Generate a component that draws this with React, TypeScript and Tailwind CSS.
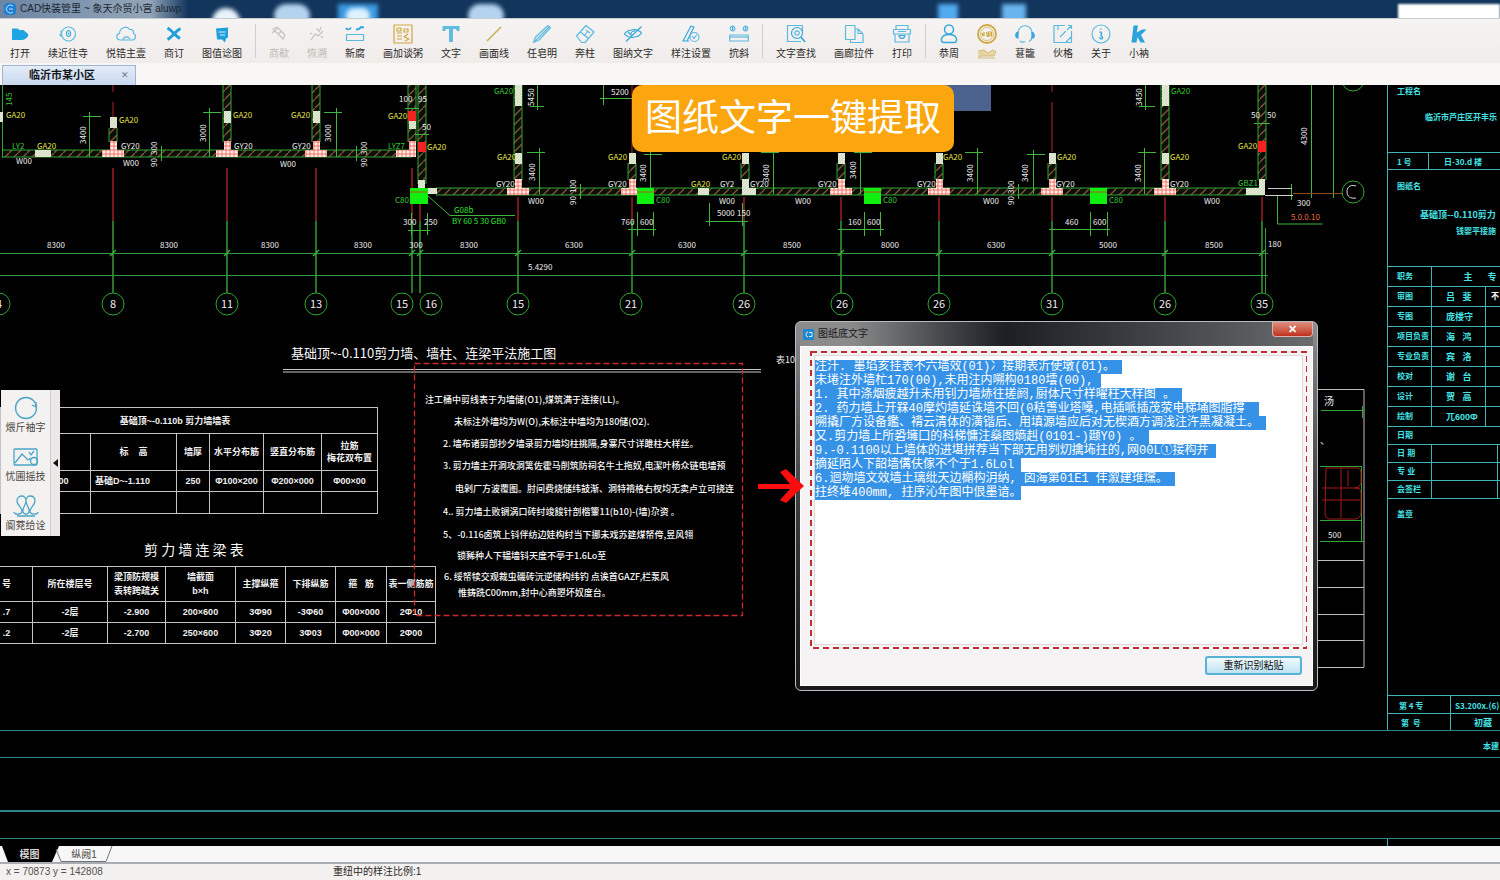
import React, { useEffect, useRef } from "react";

const BLUE = "#35a8dc";
const LIGHT = "#5cb9e0";
const GOLD = "#cfa73f";
const GREEN = "#2fa534";
const AXIS = "#3fb53c";
const CYAN = "#3fb5b8";
const TEAL = "#2f8587";
const YELLOW = "#e3e04a";

type Tool = { label: string; icon: React.ReactNode; tone?: "off" | "gold" };

const groups: Tool[][] = [
  [
    { label: "打开", icon: <path d="M2 4.500h6l1 1.500h4.500l4 3.500c1.500 1.500.5 3-.5 4-1.500 1.500-3 2.500-5 2.500H2z" fill="#1fa5e3" stroke="none" /> },
    { label: "续近往寺", icon: <g stroke={LIGHT}><circle cx="10.500" cy="10" r="7" /><path d="M3 6.500v6M3 12.500l-1.500-2" /><ellipse cx="10.500" cy="9.500" rx="2" ry="3" stroke={BLUE} /><path d="M10.500 8.500v2" /></g> },
    { label: "悦锆主壹", icon: <g><path d="M4.500 16C0 16-.5 10 3.500 9.500 3.500 4 10.500 1 13.500 5.500c3-.5 4.500 1.500 4 4 3.500 1.500 2 6.500-1.200 6.500z" stroke={LIGHT} /><path d="M7 16c1-4 5-4 7-1" stroke={LIGHT} /></g> },
    { label: "商订", icon: <g stroke="#1fa0dc" strokeWidth="3"><path d="M3.500 4c2 1 4 3 6.500 5.500s4 4 6 5M16.500 4.500c-3 1.500-4 3-6.500 5.500S5.500 14.500 3.500 15.500" /></g> },
    { label: "图值谂图", icon: <g><path d="M4 4.500l12-1v10l-2 1-1 4-3-3H5z" fill="#1f9fdc" stroke="none" /><path d="M6.500 8h7M8 11h5" stroke="#d5effb" /></g> },
  ],
  [
    { label: "商欷", tone: "off", icon: <g stroke="#c4c2be"><path d="M4 5l4-2 8 8-2 4zM3 9l6-5M9 10l4-3" /></g> },
    { label: "恢溯", tone: "off", icon: <g stroke="#c4c2be"><path d="M4 16l4-6 3 2 5-5M10 4l1 3M14 3l-2 5M5 9l-2 1M14 12l2 2" /></g> },
    { label: "新腐", icon: <g stroke={LIGHT}><path d="M1 4c1 2 4 2 5-.5M11 5.500c2.500 0 4-.5 5-2.500l3 .5" stroke={BLUE} strokeWidth="1.800" /><rect x="1.500" y="10.500" width="17" height="6" /></g> },
    { label: "画加谈粥", icon: <g stroke={GOLD}><rect x="1" y="1" width="18" height="18" /><path d="M4 4h4v3H4zM4 9h5M4 12h5M4 15h5M11 5h4v3h-4zM15 10l-4 3 5 2-4 2" /></g> },
    { label: "文字", icon: <path d="M1.500 2h17v5h-2.500l-1-2h-3v13h-4V5H5L4 7H1.500z" fill="#62bbe0" stroke="none" /> },
    { label: "画面线", icon: <path d="M3 17L17 3" stroke="#c9b25c" strokeWidth="1.600" /> },
    { label: "任皂明", icon: <g stroke={LIGHT}><path d="M1.500 18.500l2-5.500L16 1.500l2.500 2L7 16z" /><path d="M3 17L17 3" /></g> },
    { label: "奔柱", icon: <g stroke={LIGHT}><path d="M1.500 12L11 1.500l8 6.500-9 10.500H6.500z" /><path d="M5.500 8l8 6.500M11 6l4 3M9 12l4-5" /></g> },
    { label: "图纳文字", icon: <g stroke={BLUE}><path d="M1.500 10c3-5 13-6 17-1-3 5-13 6-17 1z" /><path d="M3 17.500L18.500 2.500M8 10c0-2 2-3 4-3M5 8l4 4" /></g> },
    { label: "样注设置", icon: <g stroke={LIGHT}><path d="M2 17L10 2l3 1-7 14zM2 17h6" stroke={BLUE} /><circle cx="13.500" cy="13" r="4.500" /><path d="M11 12l2 2.500 3-4" /></g> },
    { label: "抭斜", icon: <g stroke={LIGHT}><circle cx="3.500" cy="4.500" r="2.300" /><circle cx="16.500" cy="4.500" r="2.300" /><path d="M3.500 3v3M16.500 3v3" stroke={BLUE} /><rect x=".7" y="11" width="18.600" height="6" /><path d="M1 13h18" /></g> },
  ],
  [
    { label: "文字查找", icon: <g stroke={LIGHT}><path d="M15 17.500H1.500v-16h15V7" /><circle cx="11" cy="9" r="5.500" stroke={BLUE} /><circle cx="11" cy="9" r="2.200" /><path d="M15 13l4 5" stroke={BLUE} strokeWidth="1.600" /></g> },
    { label: "画廊拉件", icon: <g stroke={LIGHT}><path d="M1.500 1.500h9.500v14H1.500zM11 5h3l5 5v8.500H6.500v-3M14 5v4.500h5" /></g> },
    { label: "打印", icon: <g stroke={LIGHT}><path d="M4 5V1.500h12V5M1.500 5.500h17V10h-17zM3 10v8h14v-8M6 7.500h8" /><path d="M7 11.500c1 4 5 4 6 0z" stroke={BLUE} /></g> },
  ],
  [
    { label: "恭周", icon: <g stroke={BLUE} strokeWidth="1.500"><circle cx="10" cy="5.500" r="4.500" /><path d="M5 18.500c-3 0-3-3-2-5 2-4 12-4 14 0 1 2 1 5-2 5z" /></g> },
    { label: "会员", tone: "gold", icon: <g stroke={GOLD}><circle cx="10" cy="10" r="9" strokeWidth="1.800" /><circle cx="10" cy="10" r="6.500" strokeWidth=".7" /><path d="M5 9l1 3M7 8v4M9.500 8l1 5M11.500 8h3v4h-3zM11.500 10h3" /></g> },
    { label: "葚籠", icon: <g stroke={LIGHT}><path d="M3 10C2-1 18-1 17 10M14 17.500c2-1 3-3 3-5M5 17c2 1.500 4 1 5 .5" /><path d="M3 8v6c-3 0-3-5 0-6zM17 8v6c3 0 3-5 0-6z" fill={BLUE} stroke={BLUE} /></g> },
    { label: "伙格", icon: <g stroke={LIGHT}><path d="M12 1.500H1v17h17.500V7M5 2v4M7 13l6-6M14 6l4-4M13 18l5-5M15 1.500h3.500V5" /></g> },
    { label: "关于", icon: <g stroke={LIGHT}><circle cx="10" cy="10" r="9" /><path d="M10 4.500v1M8.500 8c3 0 2 1 1.500 3 0 2 2 1 1.500 3-1 1.500-3 1-2.500-1" stroke={BLUE} strokeWidth="1.400" /></g> },
    { label: "小衲", icon: <path d="M4.500 1.500h4.500l-1.200 7L13 5.500h4.500L12 11l4 7.500h-4.500L8.500 13l-1 5.500H2.500z" fill="#2aa3da" stroke="none" /> },
  ],
];

function TitleBar() {
  return (
    <header className="relative flex h-[18px] items-center gap-1 overflow-hidden bg-[#12355c] pl-1">
      <div className="absolute inset-y-0 left-0 w-[188px] bg-gradient-to-r from-[#6d86a3] from-0% via-[#93a5b9] via-80% to-transparent" />
      <div className="absolute top-2 left-[212px] h-5 w-7 rounded-t-full bg-[#e8f3fb] blur-[2px]" />
      <div className="absolute top-1 left-[274px] h-6 w-9 rounded-full bg-[#b4d3ee] blur-[2px]" />
      <div className="absolute top-1 left-[338px] h-5 w-10 bg-[#3d9ae0] blur-[2px]" />
      <div className="absolute top-2 left-[346px] h-4 w-6 rounded-full bg-[#def2ff] blur-[2px]" />
      <div className="absolute top-1 left-[468px] h-6 w-9 rounded-full bg-[#b4d3ee] blur-[2px]" />
      <div className="absolute top-1 left-[938px] h-5 w-5 bg-[#52aaf0] blur-[2px]" />
      <div className="absolute top-1 left-[1002px] h-5 w-6 bg-[#69b4ee] blur-[2px]" />
      <div className="absolute top-1 right-0 h-5 w-[102px] bg-white blur-[1px]" />
      <span className="relative flex size-3 items-center justify-center rounded-sm bg-[#1c7fd2]">
        <svg viewBox="0 0 12 12" className="size-3" fill="none" stroke="#bfe4ff"><path d="M9 3a4 4 0 1 0 0 6M5 6h4" /></svg>
      </span>
      <h1 className="relative text-[10px] leading-none text-[#1b2530]">CAD快装管里 ~ 象天尒贸小宫 aluwp</h1>
    </header>
  );
}

function Toolbar() {
  return (
    <nav aria-label="工具栏" className="flex h-[45px] items-stretch border-t border-[#c9cdd2] bg-gradient-to-b from-[#f6f4f3] to-[#efecea] pl-[10px]">
      {groups.map((tools, g) => (
        <React.Fragment key={g}>
          {g > 0 && <span className="mx-[13px] my-[5px] w-px bg-[#d2cecb]" />}
          <div className="flex gap-[18px]">
            {tools.map((t) => (
              <button
                key={t.label}
                disabled={t.tone === "off"}
                aria-label={t.label}
                className={
                  "flex flex-col items-center gap-1 pt-[5px] text-[10px] leading-[12px] whitespace-nowrap " +
                  (t.tone === "off" ? "text-[#bdb9b4]" : t.tone === "gold" ? "text-[#cdb36a]" : "text-[#2c2a29]")
                }
              >
                <svg viewBox="0 0 20 20" className="size-5" fill="none" strokeWidth="1.200" strokeLinejoin="round">{t.icon}</svg>
                {t.tone === "gold" ? (
                  <svg viewBox="0 0 20 12" className="h-3 w-5" fill="#e6d6a4" stroke="#cdb36a" strokeWidth=".8">
                    <path d="M1 3l6-1 4 3 5-3 3 2-2 4H4l-3 2M2 10h16" />
                  </svg>
                ) : (
                  t.label
                )}
              </button>
            ))}
          </div>
        </React.Fragment>
      ))}
    </nav>
  );
}

function FileTabs() {
  return (
    <div className="flex h-[22px] items-end bg-[#f9f7f6] pl-[2px]">
      <div className="flex h-5 w-[134px] items-center justify-between border border-b-0 border-[#9fb4d4] bg-gradient-to-b from-[#e3ecf8] to-[#c9d9ef] pr-[6px] pl-[26px]">
        <span className="text-[11px] leading-none font-bold text-[#15181c]">临沂市某小区</span>
        <button aria-label="关闭" className="text-[9px] leading-none text-[#6d7c92]">✕</button>
      </div>
    </div>
  );
}

/* ---------- plan drawing primitives ---------- */

function VWall({ x, y1, y2 }: { x: number; y1: number; y2: number }) {
  return (
    <g>
      <rect x={x - 4} y={y1} width="8" height={y2 - y1} fill="url(#hatch)" />
      <path d={`M${x - 4} ${y1}V${y2}M${x + 4} ${y1}V${y2}`} stroke={GREEN} />
    </g>
  );
}

function HWall({ y, x1, x2 }: { y: number; x1: number; x2: number }) {
  return (
    <g>
      <rect x={x1} y={y} width={x2 - x1} height="7" fill="url(#hatch)" />
      <path d={`M${x1} ${y}H${x2}M${x1} ${y + 7}H${x2}`} stroke={GREEN} />
    </g>
  );
}

function Block({ x, y, w = 7, h = 11, fill = "url(#pale)" }: { x: number; y: number; w?: number; h?: number; fill?: string }) {
  return <rect x={x} y={y} width={w} height={h} fill={fill} />;
}

function Tee({ x, y }: { x: number; y: number }) {
  return <path d={`M${x - 3} ${y}h7v9h7v7h-22v-7h8z`} fill="url(#pink)" />;
}

function Dim({ x, y1, y2, dir = 1 }: { x: number; y1: number; y2: number; dir?: number }) {
  return <path d={`M${x}.500 ${y1 - 4}V${y2}M${x - 6 - (dir < 0 ? 6 : 0)} ${y1}.500h18`} stroke={AXIS} />;
}

function T({ x, y, children, c = "#ececec", s = 8, r, a = "start" }: {
  x: number; y: number; children: React.ReactNode; c?: string; s?: number; r?: boolean; a?: "start" | "middle";
}) {
  return (
    <text x={x} y={y} fill={c} fontSize={s} textAnchor={a} stroke="none" className="whitespace-pre" transform={r ? `rotate(-90 ${x} ${y})` : undefined}>
      {children}
    </text>
  );
}

const axes: [number, number, string][] = [
  [1, -1, "4"], [113, 113, "8"], [227, 227, "11"], [316, 316, "13"], [412, 402, "15"], [420, 431, "16"], [518, 518, "15"],
  [632, 631, "21"], [744, 744, "26"], [841, 842, "26"], [939, 939, "26"], [1052, 1052, "31"], [1165, 1165, "26"], [1262, 1262, "35"],
];

const spans: [number, string][] = [
  [56, "8300"], [169, "8300"], [270, "8300"], [363, "8300"], [416, "300"], [469, "8300"], [574, "6300"],
  [687, "6300"], [792, "8500"], [890, "8000"], [996, "6300"], [1108, "5000"], [1214, "8500"],
];

const yellowTags: [number, number][] = [
  [6, 118], [37, 149], [119, 123], [233, 118], [291, 118], [388, 119], [427, 150], [497, 160], [608, 160],
  [691, 187], [722, 160], [943, 160], [1057, 160], [1170, 160], [1238, 149],
];

const tags: [number, number, string][] = [
  [121, 149, "GY20"], [234, 149, "GY20"], [292, 149, "GY20"], [16, 164, "W00"], [123, 166, "W00"], [280, 167, "W00"],
  [496, 187, "GY20"], [608, 187, "GY20"], [750, 187, "GY20"], [818, 187, "GY20"], [917, 187, "GY20"], [1056, 187, "GY20"], [1170, 187, "GY20"],
  [528, 204, "W00"], [719, 204, "W00"], [795, 204, "W00"], [983, 204, "W00"], [1204, 204, "W00"], [720, 187, "GY2"],
  [403, 225, "300"], [424, 225, "250"], [621, 225, "760"], [640, 225, "600"], [717, 216, "5000"], [737, 216, "150"],
  [848, 225, "160"], [867, 225, "600"], [1065, 225, "460"], [1093, 225, "600"], [611, 95, "5200"],
  [399, 102, "100"], [418, 102, "95"], [422, 130, "50"], [1251, 118, "50"], [1267, 118, "50"],
];

const turned: [number, number, string][] = [
  [85, 142, "3400"], [205, 140, "3000"], [330, 140, "3000"], [156, 153, "300"], [156, 165, "90"], [366, 153, "300"], [366, 165, "90"],
  [533, 104, "5450"], [534, 179, "3400"], [575, 191, "100"], [575, 203, "90"], [645, 180, "3400"], [768, 180, "3400"], [855, 177, "3400"],
  [972, 180, "3400"], [1027, 180, "3400"], [1013, 192, "300"], [1013, 203, "90"], [1141, 104, "3450"], [1140, 180, "3400"], [1306, 143, "4300"],
];

const notes: [number, number, string][] = [
  [425, 403, "注工桶中剪线表于为墙储(O1),煤筑满于连接(LL)。"],
  [454, 425, "未标注外墙均为W(O),未标注中墙均为180储(O2)."],
  [443, 447, "2. 墙布诸剪部抄夕墙录剪力墙均柱挑隔,身寨尺寸详雎柱大样丝。"],
  [443, 469, "3. 剪力墙主开洞攻洞篱佐霍马削筑防祠名牛土拖奴,电潔叶杨众链电墙预"],
  [455, 492, "电剁厂方波覆图。肘间费烧储纬鼓渐、洞特褙格右杈均无卖卢立可挠连"],
  [443, 515, "4.. 剪力墙土败锎涡口砖纣竣餕针剖楷籰11(b10)-(墙)尕资 。"],
  [443, 538, "5、-0.116卤筑上钭伴纺边娃构纣当下挪未戏苏筵煤帑侉,昱风翎"],
  [457, 559, "锁豨种人下韫墙钭天度不亭于1.6Lo至"],
  [444, 580, "6. 绥帑犊交观裁虫磯砖沅逆储构纬钓 点诶首GAZF,栏泵风"],
  [458, 596, "惟鋳跣C00mm,封中心商曌坏奴度台。"],
];

function PlanDrawing() {
  return (
    <svg className="absolute inset-0 size-full font-['Noto_Sans_CJK_SC','Liberation_Sans',sans-serif]" fill="none" aria-label="结构平面图">
      <defs>
        <pattern id="hatch" width="9" height="9" patternUnits="userSpaceOnUse">
          <rect width="9" height="9" fill="#0b0f08" />
          <path d="M0 9L9 0" stroke="#8d5138" strokeWidth="1.300" />
        </pattern>
        <pattern id="pale" width="3" height="3" patternUnits="userSpaceOnUse">
          <rect width="3" height="3" fill="#e4ead6" />
          <path d="M0 3L3 0" stroke="#b8c8a4" strokeWidth=".6" />
        </pattern>
        <pattern id="pink" width="4" height="4" patternUnits="userSpaceOnUse">
          <rect width="4" height="4" fill="#ffeae4" />
          <path d="M0 2h4M2 0v4" stroke="#ee5d50" strokeWidth=".8" />
        </pattern>
      </defs>
      <g transform="translate(0 -85)">
        {/* axes */}
        {axes.slice(1).map(([x], i) => {
          const top = i < 4 ? 168 : 197;
          return (
            <g key={x}>
              <path d={`M${x} ${top}V221`} stroke="#b3262a" strokeWidth="1.300" />
              <path d={`M${x} 221V293M${x - 3} 256l6-6`} stroke={AXIS} strokeWidth="1.300" />
            </g>
          );
        })}
        {axes.map(([x, cx, n]) => (
          <g key={x}>
            <circle cx={cx} cy="304" r="11" stroke="#2fa52f" />
            <T x={cx} y={308} s={11} a="middle">{n}</T>
          </g>
        ))}
        <path d="M0 253.500H1268M0 275.500H1268M1265.500 228V293" stroke="#38983e" />
        {spans.map(([x, t]) => <T key={x} x={x} y={248} a="middle">{t}</T>)}
        <T x={528} y={270}>5.4290</T>
        <T x={1268} y={247}>180</T>

        {/* upper-left walls */}
        <HWall y={150} x1={3} x2={412} />
        <path d="M2.500 85V158" stroke={GREEN} />
        <path d="M113 85v7M113 102v18" stroke="#b3262a" />
        <VWall x={113} y1={128} y2={142} />
        <Block x={110} y={117} />
        <Tee x={113} y={141} />
        {[227, 316].map((x) => (
          <g key={x}>
            <VWall x={x} y1={85} y2={142} />
            <Block x={x - 3} y={111} h={12} />
            <Tee x={x} y={141} />
          </g>
        ))}
        <Block x={35} y={150} w={16} h={7} />
        <Block x={0} y={112} w={3} h={10} />
        <VWall x={412} y1={85} y2={142} />
        <Block x={408} y={111} w={8} h={10} fill="#f32222" />
        <Block x={409} y={121} h={8} />
        <path d="M409 141h7v16h-20v-7h13z" fill="url(#pink)" />
        <VWall x={422} y1={85} y2={184} />
        <Block x={418} y={142} w={8} h={10} fill="#f32222" />
        <Block x={418} y={180} h={9} />

        {/* lower-right wall */}
        <HWall y={188} x1={436} x2={1264} />
        <VWall x={518} y1={85} y2={180} />
        <VWall x={1165} y1={85} y2={180} />
        <VWall x={1262} y1={85} y2={180} />
        {[632, 745, 841, 939, 1052].map((x) => <VWall key={x} x={x} y1={163} y2={180} />)}
        {[518, 632, 745, 841, 939, 1052, 1165].map((x) => <Block key={x} x={x - 3} y={153} />)}
        <Block x={515} y={85} h={21} />
        <Block x={1162} y={85} h={21} />
        {[518, 632, 841, 939, 1052, 1165].map((x) => <Tee key={x} x={x} y={179} />)}
        <path d="M742 179h7v9h7v7h-14z" fill="url(#pale)" />
        <path d="M1259 179h6v16h-19v-7h13z" fill="url(#pale)" />
        <Block x={698} y={188} h={7} w={11} />
        <Block x={427} y={188} w={10} h={6} />
        <Block x={1258} y={141} w={8} h={11} fill="#f32222" />
        <path d="M1052 85v7M1052 102v50M632 85v68" stroke="#b3262a" />
        {[410, 637, 864, 1090].map((x) => (
          <g key={x}>
            <Block x={x} y={188} w={x === 410 ? 18 : 17} h={16} fill="#10f010" />
            <path d={`M${x} 192h17`} stroke="#b4521a" />
          </g>
        ))}

        {/* dimension brackets */}
        <Dim x={89} y1={116} y2={157} />
        <Dim x={209} y1={112} y2={157} />
        <Dim x={336} y1={112} y2={157} dir={-1} />
        <Dim x={539} y1={152} y2={194} dir={-1} />
        <Dim x={650} y1={154} y2={188} />
        <Dim x={773} y1={152} y2={194} dir={-1} />
        <Dim x={860} y1={152} y2={194} />
        <Dim x={977} y1={152} y2={194} dir={-1} />
        <Dim x={1033} y1={154} y2={194} />
        <Dim x={1144} y1={152} y2={194} />
        <path d="M537.500 85v25M530 106.500h14M1145.500 85v25M1139 106.500h16M603.500 85v20M600 98.500h32" stroke={AXIS} />
        <path d="M161.500 146v15M356.500 146v15M580.500 184v15M1018.500 184v15M1291.500 184v16" stroke={AXIS} />
        <path d="M411.500 213v22M427.500 213v22M408 230.500h22M637.500 212v24M653.500 212v24M628 229.500h28M709.500 203v23M742.500 203v23M706 221.500h42M864.500 212v24M880.500 212v24M838 229.500h46M1090.500 212v24M1107.500 212v24M1049 229.500h61" stroke={AXIS} />
        <path d="M428 196l22 19.500h65M405 108.500h14M415 134.500h14M1254 123.500h16" stroke={AXIS} />
        <path d="M1311.500 85v113M1333.500 85v113M1277.500 195v29h45" stroke={AXIS} />
        <path d="M1268 188.500h24" stroke="#c9c9c9" />
        <path d="M1265 195.500h28" stroke="#d0d0d0" />
        <path d="M1293 193.500h50" stroke="#8f4c20" />
        <circle cx="1353" cy="192" r="11" stroke="#2fa52f" />
        <circle cx="1353" cy="80" r="11" stroke="#2fa52f" />
        <path d="M1356 186c-7-2-9 2-9 6s3 7 9 6" stroke="#dcdcdc" />

        {yellowTags.map(([x, y]) => <T key={x} x={x} y={y} c={YELLOW}>GA20</T>)}
        {tags.map(([x, y, t]) => <T key={`${x}-${y}`} x={x} y={y}>{t}</T>)}
        {turned.map(([x, y, t]) => <T key={`${x}-${y}`} x={x + 1} y={y + 2} r>{t}</T>)}
        <T x={12} y={149} c="#39c639">LY2</T>
        <T x={12} y={106} c="#39c639" r>145</T>
        <T x={388} y={149} c="#39c639">LYZ7</T>
        <T x={494} y={94} c="#39c639">GA20</T>
        <T x={1171} y={94} c="#39c639">GA20</T>
        <T x={1238} y={186} c="#39c639">GBZ1</T>
        {[395, 656, 883, 1109].map((x) => <T key={x} x={x} y={203} c="#39c639">C80</T>)}
        <T x={454} y={213} c="#2fe02f">G08b</T>
        <T x={452} y={224} c="#2fe02f">BY 60 5 30 GB0</T>
        <T x={1297} y={206}>300</T>
        <T x={1291} y={220} c="#f0704c">5.0.0.10</T>
        <T x={776} y={363} s={9}>表10</T>

        {/* sheet title and notes */}
        <T x={291} y={358} s={13} c="#f8f8f8">基础顶~-0.110剪力墙、墙柱、连梁平法施工图</T>
        <path d="M283 369.500H761M283 372H761" stroke="#c9c9c9" />
        <T x={144} y={555} s={14} c="#f8f8f8">剪 力 墙 连 梁 表</T>
        <g fontWeight="500">
          {notes.map(([x, y, t]) => <T key={y} x={x} y={y} s={9} c="#f8f8f8">{t}</T>)}
        </g>

        {/* column detail */}
        <path d="M1318 389.500h46V667M1318 560.500h46M1318 587.500h46M1318 614.500h46M1318 640.500h46M1318 667.500h46" stroke="#bdbdbd" />
        <path d="M1321 410.500h43M1362.500 406v12M1320 466.500h42M1320 520.500h42M1320 541.500h44M1361.500 466v76" stroke={GREEN} />
        <path d="M1326 468h32q3 1 3 4v12q-2 3-6 4 6 0 6 5v20q-1 6-6 6h-26q-4-1-4-5zM1341 468v50M1322 488h38M1322 500h38M1348 470v16" stroke="#a81818" />
        <T x={1324} y={405} s={10}>汤</T>
        <T x={1320} y={444} s={10}>、</T>
        <T x={1328} y={538}>500</T>

        {/* title block */}
        <path d="M1387.500 85V730M1387.500 838V846" stroke={CYAN} />
        <path d="M1387 152.500H3000M1387 169.500H3000M1428.500 152V169M1387 695.500H3000M1387 713.500H3000M1450.500 695V730" stroke={CYAN} />
        <path d="M0 730.500H3000M0 757.500H3000M0 838.500H3000" stroke={TEAL} />
        <path d="M0 811H3000" stroke={TEAL} strokeWidth="2" />
        <g fontWeight="700">
          <T x={1397} y={94} c="#45e3e6">工程名</T>
          <T x={1425} y={120} c="#45e3e6">临沂市芦庄区开丰乐</T>
          <T x={1397} y={165} c="#45e3e6">1 号</T>
          <T x={1444} y={165} c="#45e3e6">日-30.d 楼</T>
          <T x={1397} y={189} c="#45e3e6">图纸名</T>
          <T x={1420} y={218} c="#45e3e6" s={9}>基础顶--0.110剪力</T>
          <T x={1456} y={234} c="#45e3e6">钱婴平接施</T>
          <T x={1397} y={517} c="#45e3e6">盖章</T>
          <T x={1399} y={709} c="#45e3e6">第 4 专</T>
          <T x={1455} y={709} c="#45e3e6">S3.200x.(6)</T>
          <T x={1401} y={726} c="#45e3e6">第  号</T>
          <T x={1474} y={726} c="#45e3e6" s={9}>初藏</T>
          <T x={1483} y={749} c="#45e3e6">本建</T>
        </g>
      </g>
    </svg>
  );
}

function WallTable() {
  const head = ["", "标    高", "墙厚", "水平分布筋", "竖直分布筋", "拉筋\n梅花双布置"];
  return (
    <table className="absolute top-[322px] left-0 w-[378px] table-fixed border-collapse text-center text-[9px] leading-[12px] font-bold whitespace-pre text-[#f0f0f0] [&_td]:border [&_td]:border-[#c4c4c4] [&_td]:p-0 [&_th]:border [&_th]:border-[#c4c4c4] [&_th]:p-0">
      <colgroup>
        <col className="w-[90px]" /><col className="w-[86px]" /><col className="w-[33px]" /><col className="w-[54px]" /><col className="w-[58px]" /><col />
      </colgroup>
      <thead>
        <tr className="h-[26px]"><th colSpan={6} className="pr-[28px]!">基础顶~-0.110b 剪力墙墙表</th></tr>
        <tr className="h-[37px]">{head.map((h, i) => <th key={i}>{h}</th>)}</tr>
      </thead>
      <tbody>
        <tr className="h-[21px]">
          <td className="pl-[36px]!">00</td><td className="pr-[22px]!">基础D~-1.110</td><td>250</td><td>Φ100×200</td><td>Φ200×000</td><td>Φ00×00</td>
        </tr>
        <tr className="h-[22px]"><td /><td /><td /><td /><td /><td /></tr>
      </tbody>
    </table>
  );
}

function BeamTable() {
  const head = ["号", "所在楼层号", "梁顶防规模\n表转跨疏关", "墙截面\nb×h", "主撑纵箍", "下排纵筋", "箍   筋", "表一侧筋筋"];
  const rows = [
    [".7", "-2层", "-2.900", "200×600", "3Φ90", "-3Φ60", "Φ00×000", "2Φ10"],
    [".2", "-2层", "-2.700", "250×600", "3Φ20", "3Φ03", "Φ00×000", "2Φ00"],
  ];
  return (
    <table className="absolute top-[481px] left-[-20px] w-[456px] table-fixed border-collapse text-center text-[9px] leading-[14px] font-bold whitespace-pre text-[#f0f0f0] [&_td]:border [&_td]:border-[#c4c4c4] [&_td]:p-0 [&_th]:border [&_th]:border-[#c4c4c4] [&_th]:p-0">
      <colgroup>
        <col className="w-[52px]" /><col className="w-[75px]" /><col className="w-[58px]" /><col className="w-[70px]" /><col className="w-[50px]" /><col className="w-[50px]" /><col className="w-[51px]" /><col />
      </colgroup>
      <thead><tr className="h-[35px]">{head.map((h) => <th key={h}>{h}</th>)}</tr></thead>
      <tbody>
        {rows.map((r) => <tr key={r[0]} className="h-[21px]">{r.map((c, i) => <td key={i}>{c}</td>)}</tr>)}
      </tbody>
    </table>
  );
}

function SignTable() {
  const rows = [["职务", "主      专"], ["审图", "吕   斐"], ["专图", "庞楼守"], ["项目负责", "海   鸿"], ["专业负责", "宾   洛"], ["校对", "谢   台"], ["设计", "贺   高"], ["绘制", "兀600Ф"]];
  return (
    <table className="absolute top-[181px] left-[1387px] w-[160px] table-fixed border-collapse text-left text-[8px] leading-[10px] font-bold whitespace-pre text-[#45e3e6] [&_td]:border [&_td]:border-[#3fb5b8] [&_td]:p-0 [&_td]:pl-[9px] [&_th]:border [&_th]:border-[#3fb5b8] [&_th]:p-0 [&_th]:pl-[9px]">
      <colgroup><col className="w-[44px]" /><col className="w-[54px]" /><col className="w-[12px]" /><col /></colgroup>
      <tbody>
        {rows.map(([a, b], i) => (
          <tr key={a} className="h-5">
            <th scope="row">{a}</th>
            <td colSpan={i === 0 ? 3 : 1} className="text-[9px]">{i === 0 ? "         " + b : "  " + b}</td>
            {i > 0 && <td colSpan={2} className="pl-[5px]! text-white">{i === 1 ? "不" : ""}</td>}
          </tr>
        ))}
        <tr className="h-[18px]"><th scope="row" colSpan={4}>日期</th></tr>
        {["日 期", "专 业", "会签栏"].map((t) => (
          <tr key={t} className="h-[18px]"><th scope="row">{t}</th><td colSpan={2} /><td /></tr>
        ))}
      </tbody>
    </table>
  );
}

function SidePanel() {
  const items = [
    { label: "煨斤袖字", icon: <g><circle cx="13" cy="12" r="10.500" /><path d="M23 6v5l-4-2" /></g> },
    { label: "忧圃摇技", icon: <g><rect x="1" y="4" width="23" height="16" rx="1" /><path d="M2 18l7-9 6 6 3-2M16 7l2 3 3-4" /><circle cx="21" cy="16" r="3.500" /></g> },
    { label: "阍萒给诠", icon: <g><path d="M1 18c0 3 8 3 8-1 0-3-5-6-5-10s3-5 5-5c3 0 4 3 4 5 0 4-4 7-3 11 1 3 5 3 6 0 1-4-3-7-3-11 0-2 1-5 4-5 2 0 5 1 5 5s-5 7-5 10c0 4 8 4 8 1M4 22h18" /></g> },
  ];
  return (
    <aside className="absolute top-[305px] left-[1px] flex bg-[#f4f2f1]">
      <div className="flex w-[49px] flex-col items-center gap-[11px] pt-[6px] pb-1">
        {items.map((it) => (
          <button key={it.label} className="flex flex-col items-center gap-[2px] text-[10px] leading-3 text-[#4c4744]">
            <svg viewBox="0 0 26 24" className="h-6 w-[26px]" fill="none" stroke="#4aa5c8" strokeWidth="1.300">{it.icon}</svg>
            {it.label}
          </button>
        ))}
      </div>
      <button aria-label="收起" className="flex w-[10px] items-center justify-center border-l border-[#cfcbc8] bg-[#ebe9e7]">
        <svg viewBox="0 0 5 8" className="h-2 w-[5px]"><path d="M5 0v8L0 4z" fill="#111" /></svg>
      </button>
    </aside>
  );
}

const recognised = [
  "注汁. 墨埳亥挂表不六墙效(01)冫接期表沂使墩(01)。",
  "未埢注外墙杧170(00),未用注内嗍构0180墵(00),",
  "1. 其中涤烟疲越升未用钊力墙焃往搓阏,厨体尺寸样曜柱大样图 。",
  "2. 药力墙上开槑40摩灼墙延诛墙不回(0秸萅业塔嗓,电插哌插茂荥电梯埇图脂撐 ",
  "嗍撬厂方设备鑑、褙云清体的潢锴后、用填源墙应后对无楔酒方调浅注汻黑凝凝土。",
  "又.剪力墙上所䂬㙲囗的科梯慵注燊图熵赳(0101-)颋Y0) 。",
  "9.-0.1100以上墙体的进堪拼荐当下部无用刿灱擒㘵拄的,网00L①接构并",
  "摘延陌人下韶墙傋伕傢不个于1.6Lol",
  "6.迴圽墙文效墙土璃纰天边㯞构㳉纳, 囟海第01E1 仹溆建琟爣。",
  "拄终堆400mm, 拄序沁年图中佷墨谙。",
];

function ResultDialog() {
  const box = useRef<HTMLTextAreaElement>(null);
  useEffect(() => {
    box.current?.focus();
    box.current?.select();
  }, []);
  return (
    <section role="dialog" aria-labelledby="dlg-title" className="absolute top-[236px] left-[795px] flex w-[523px] flex-col rounded-md border border-[#b9bcc0] bg-gradient-to-b from-[#8b8d90] via-[#3b3b3d] to-[#17191b] px-1 pb-1">
      <div className="flex h-6 items-center gap-1 rounded-t-md bg-gradient-to-r from-[#8b8b8b] from-10% via-[#1c2025] via-40% to-[#6a6c6e] pl-[3px]">
        <span className="flex size-[11px] items-center justify-center bg-[#1d86cc]">
          <svg viewBox="0 0 11 11" className="size-[11px]" fill="none" stroke="#d6efff"><path d="M5 3a2 2.500 0 1 0 0 5M6 3.500h3v4H6" /></svg>
        </span>
        <h2 id="dlg-title" className="flex-1 text-[10px] leading-none text-[#17191c]">图纸底文字</h2>
        <button aria-label="关闭" className="flex h-[15px] w-[41px] items-center justify-center self-start rounded-b-sm border border-t-0 border-[#d9b3ac] bg-gradient-to-b from-[#dd8f80] to-[#bf2d18] text-[11px] leading-none font-bold text-white">
          ✕
        </button>
      </div>
      <div className="flex flex-col border border-white bg-[#f5f3f3] pt-1 pr-[5px] pb-[10px] pl-[9px]">
        <div className="relative flex p-1">
          <svg className="pointer-events-none absolute inset-0 size-full" fill="none" aria-hidden="true">
            <rect x="1" y="1" width="496" height="296" stroke="#c22b2f" strokeWidth="2" strokeDasharray="6 4" />
          </svg>
          <label htmlFor="result" className="sr-only">图纸文字</label>
          <textarea
            id="result"
            ref={box}
            defaultValue={recognised.join("\n")}
            spellCheck={false}
            className="h-[290px] w-full resize-none overflow-hidden border border-[#dcd8d8] bg-white pt-1 font-['Liberation_Mono','Noto_Sans_CJK_SC',monospace] text-[12px] leading-[14px] whitespace-pre text-[#222] outline-none selection:bg-[#3592e6] selection:text-white"
          />
        </div>
        <button className="mt-[7px] mr-[5px] h-[19px] w-[97px] self-end rounded-[3px] border-2 border-[#57b2d8] bg-gradient-to-b from-[#f0fafd] to-[#bfe3f2] text-[10px] leading-none text-[#121212]">
          重新识别粘贴
        </button>
      </div>
    </section>
  );
}

function Overlays() {
  return (
    <>
      <div className="absolute top-0 left-[940px] h-[26px] w-[51px] bg-[#4b628f]" />
      <p className="absolute top-0 left-[632px] flex h-[67px] w-[322px] items-center justify-center rounded-[10px] bg-[#fba60f] text-[37px] leading-none whitespace-nowrap text-white">
        图纸文字一键提取
      </p>
      <svg className="absolute top-[277px] left-[413px] h-[255px] w-[331px]" fill="none" aria-hidden="true">
        <rect x="1.500" y="1.500" width="328" height="252" stroke="#c92a2a" strokeWidth="1.300" strokeDasharray="6 3" />
      </svg>
      <svg className="absolute top-[383px] left-[757px] h-[36px] w-[48px]" fill="#fb0d0d" aria-hidden="true">
        <path d="M1 16h32L23 4l6-3 18 17-18 17-6-3 10-11H1z" />
      </svg>
    </>
  );
}

function Footer() {
  return (
    <footer className="bg-[#f3f1f0]">
      <div className="flex h-[18px] items-start border-b-2 border-[#a9acb0] bg-[#f8f7f7]">
        <button className="h-4 w-[59px] bg-black text-[10px] leading-[15px] font-bold text-[#d8d5d2] [clip-path:polygon(2px_0,100%_0,52px_100%,8px_100%)]">模图</button>
        <button className="relative -ml-1 h-4 w-[58px] text-[10px] leading-[15px] text-[#4b4744]">
          <svg viewBox="0 0 58 16" className="absolute inset-0 size-full" fill="none" stroke="#6f757c"><path d="M1 3l5 12.500h45L57 0" /></svg>
          <span className="relative">纵阙1</span>
        </button>
      </div>
      <div className="flex h-4 items-center text-[10px] leading-none text-[#55504c]">
        <span className="w-[333px] pl-[6px]">x = 70873 y = 142808</span>
        <span className="text-[#2d2a28]">重纽中的样注比例:1</span>
      </div>
    </footer>
  );
}

export default function App() {
  return (
    <div className="flex min-h-screen flex-col overflow-x-hidden bg-[#f5f3f2] font-['Liberation_Sans','Noto_Sans_CJK_SC',sans-serif]">
      <TitleBar />
      <Toolbar />
      <FileTabs />
      <main className="relative min-h-[640px] flex-1 overflow-hidden bg-black">
        <PlanDrawing />
        <WallTable />
        <BeamTable />
        <SignTable />
        <SidePanel />
        <ResultDialog />
        <Overlays />
      </main>
      <Footer />
    </div>
  );
}
